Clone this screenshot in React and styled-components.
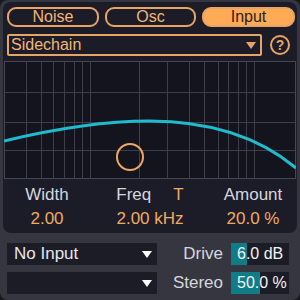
import React from 'react';
import styled, { createGlobalStyle } from 'styled-components';

const GlobalStyle = createGlobalStyle`
  body {
    margin: 0;
    background: #18181e;
    font-family: 'Liberation Sans', Arial, sans-serif;
  }
`;

const ORANGE = '#e6a466';

// log grid positions, in graph coords
const vLines = [22, 37, 49, 60, 70, 78, 86, 135, 163, 185, 200, 214, 224, 234, 242, 250];
const hLines = [31, 61, 89];

export default function App() {
  return (
    <>
      <GlobalStyle />
      <Device>
        <Panel>
          <TabRow>
            <Tab>Noise</Tab>
            <Tab>Osc</Tab>
            <Tab $active>Input</Tab>
          </TabRow>
          <SelectRow>
            <Select>
              <span>Sidechain</span>
              <Caret $color={ORANGE} />
            </Select>
            <Help>?</Help>
          </SelectRow>
          <Graph>
            <svg width="292" height="118" viewBox="0 0 292 118">
              <rect x="0" y="0" width="292" height="118" fill="#14141f" />
              {vLines.map(x => (
                <line key={x} x1={x + 0.5} y1="0" x2={x + 0.5} y2="118" stroke="#3d3d4c" strokeWidth="1" />
              ))}
              {hLines.map(y => (
                <line key={y} x1="0" y1={y + 0.5} x2="292" y2={y + 0.5} stroke="#3d3d4c" strokeWidth="1" />
              ))}
              <rect x="0.5" y="0.5" width="291" height="117" fill="none" stroke="#454553" />
              <path
                d="M0 80 C 50 68, 100 60, 145 60 C 200 60, 250 72, 292 107"
                fill="none"
                stroke="#1fbccd"
                strokeWidth="3"
              />
              <circle cx="126" cy="96" r="13" fill="none" stroke="#f0a860" strokeWidth="2" />
            </svg>
          </Graph>
          <Params>
            <Param>
              <Label>Width</Label>
              <Value>2.00</Value>
            </Param>
            <Param>
              <Label>
                Freq<Mark>T</Mark>
              </Label>
              <Value>2.00 kHz</Value>
            </Param>
            <Param>
              <Label>Amount</Label>
              <Value>20.0 %</Value>
            </Param>
          </Params>
        </Panel>
        <Bottom>
          <Menus>
            <Menu>
              <span>No Input</span>
              <Caret $color="#ffffff" />
            </Menu>
            <Menu>
              <span />
              <Caret $color="#ffffff" />
            </Menu>
          </Menus>
          <Knobs>
            <KnobRow>
              <KnobLabel>Drive</KnobLabel>
              <Slider>
                <Fill style={{ width: '28%' }} />
                <SliderText>6.0 dB</SliderText>
              </Slider>
            </KnobRow>
            <KnobRow>
              <KnobLabel>Stereo</KnobLabel>
              <Slider>
                <Fill style={{ width: '50%' }} />
                <SliderText>50.0 %</SliderText>
              </Slider>
            </KnobRow>
          </Knobs>
        </Bottom>
      </Device>
    </>
  );
}

const Device = styled.div`
  width: 300px;
  height: 300px;
  box-sizing: border-box;
  background: #363640;
  border-radius: 8px;
  padding: 2px 3px 0;
  display: flex;
  flex-direction: column;
`;

const Panel = styled.div`
  background: #1c1c28;
  border-radius: 8px;
  height: 231px;
  box-sizing: border-box;
  padding-top: 5px;
  display: flex;
  flex-direction: column;
`;

const TabRow = styled.div`
  display: grid;
  grid-template-columns: 92px 91px 93px;
  gap: 6px;
  padding: 0 3px 0 4px;
`;

const Tab = styled.div`
  height: 20px;
  box-sizing: border-box;
  border: 2px solid ${ORANGE};
  border-radius: 9px;
  background: ${p => (p.$active ? '#ffaa55' : 'transparent')};
  color: ${p => (p.$active ? '#2b2320' : '#f2b676')};
  font-size: 16px;
  line-height: 16px;
  text-align: center;
`;

const SelectRow = styled.div`
  display: flex;
  align-items: center;
  gap: 8px;
  margin-top: 7px;
  padding: 0 7px 0 4px;
`;

const Select = styled.div`
  flex: 1;
  height: 22px;
  box-sizing: border-box;
  border: 2px solid ${ORANGE};
  border-radius: 2px;
  display: flex;
  align-items: center;
  justify-content: space-between;
  padding: 0 3px 0 2px;
  color: #f2b676;
  font-size: 16px;
`;

const Caret = styled.span`
  width: 0;
  height: 0;
  border-left: 5px solid transparent;
  border-right: 5px solid transparent;
  border-top: 7px solid ${p => p.$color};
  margin-right: 1px;
`;

const Help = styled.div`
  width: 20px;
  height: 20px;
  box-sizing: border-box;
  border: 2px solid ${ORANGE};
  border-radius: 50%;
  color: ${ORANGE};
  font-size: 14px;
  font-weight: bold;
  line-height: 16px;
  text-align: center;
`;

const Graph = styled.div`
  margin: 5px 1px 0;
  height: 118px;
  svg {
    display: block;
  }
`;

const Params = styled.div`
  display: grid;
  grid-template-columns: 88px 1fr 88px;
  margin-top: 6px;
`;

const Param = styled.div`
  display: flex;
  flex-direction: column;
  align-items: center;
  gap: 4px;
`;

const Label = styled.div`
  color: #d6d6de;
  font-size: 17px;
  line-height: 20px;
`;

const Mark = styled.span`
  color: #f0aa64;
  margin-left: 22px;
`;

const Value = styled.div`
  color: #f0aa64;
  font-size: 17px;
  line-height: 20px;
`;

const Bottom = styled.div`
  display: flex;
  margin-top: 10px;
  padding: 0 8px 0 4px;
  gap: 12px;
`;

const Menus = styled.div`
  display: flex;
  flex-direction: column;
  gap: 7px;
  width: 150px;
`;

const Menu = styled.div`
  height: 22px;
  background: #1c1c27;
  display: flex;
  align-items: center;
  justify-content: space-between;
  padding: 0 4px 0 7px;
  color: #e6e6ec;
  font-size: 17px;
`;

const Knobs = styled.div`
  flex: 1;
  display: flex;
  flex-direction: column;
  gap: 7px;
`;

const KnobRow = styled.div`
  display: flex;
  align-items: center;
  justify-content: flex-end;
  gap: 8px;
  height: 22px;
`;

const KnobLabel = styled.div`
  color: #d6d6de;
  font-size: 17px;
`;

const Slider = styled.div`
  position: relative;
  width: 58px;
  height: 22px;
  background: #1c1c27;
  overflow: hidden;
`;

const Fill = styled.div`
  position: absolute;
  left: 0;
  top: 0;
  bottom: 0;
  background: #107d86;
`;

const SliderText = styled.div`
  position: relative;
  color: #f2f2f6;
  font-size: 16px;
  line-height: 22px;
  padding-left: 6px;
  white-space: nowrap;
`;
